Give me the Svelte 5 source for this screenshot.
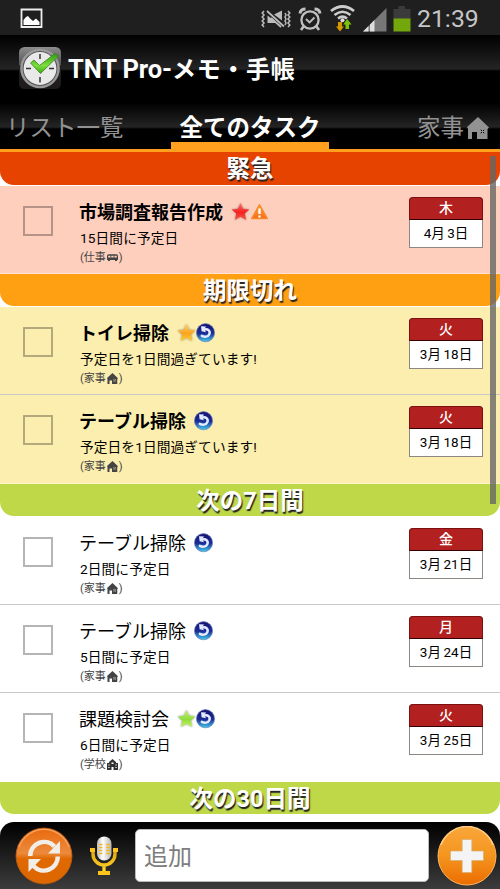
<script lang="ts">
  type Task = {
    title: string;
    due: string;
    list: string;
    place: "bus" | "home" | "school";
    star?: "red" | "gold" | "green";
    warning?: boolean;
    repeat?: boolean;
    weekday: string;
    date: string;
  };

  type Section = { name: string; tone: string; tasks: Task[] };

  const sections: Section[] = [
    {
      name: "緊急",
      tone: "urgent",
      tasks: [
        { title: "市場調査報告作成", due: "15日間に予定日", list: "仕事", place: "bus", star: "red", warning: true, weekday: "木", date: "4月 3日" },
      ],
    },
    {
      name: "期限切れ",
      tone: "overdue",
      tasks: [
        { title: "トイレ掃除", due: "予定日を1日間過ぎています!", list: "家事", place: "home", star: "gold", repeat: true, weekday: "火", date: "3月 18日" },
        { title: "テーブル掃除", due: "予定日を1日間過ぎています!", list: "家事", place: "home", repeat: true, weekday: "火", date: "3月 18日" },
      ],
    },
    {
      name: "次の7日間",
      tone: "upcoming",
      tasks: [
        { title: "テーブル掃除", due: "2日間に予定日", list: "家事", place: "home", repeat: true, weekday: "金", date: "3月 21日" },
        { title: "テーブル掃除", due: "5日間に予定日", list: "家事", place: "home", repeat: true, weekday: "月", date: "3月 24日" },
        { title: "課題検討会", due: "6日間に予定日", list: "学校", place: "school", star: "green", repeat: true, weekday: "火", date: "3月 25日" },
      ],
    },
    { name: "次の30日間", tone: "upcoming", tasks: [] },
  ];

  let checked = $state<Record<string, boolean>>({});
  let draft = $state("");

  function toggle(key: string) {
    checked[key] = !checked[key];
  }
</script>

{#snippet star(color: string)}
  <svg class="star {color}" width="19" height="20" viewBox="0 0 19 20">
    <path d="M9.5 1 L12.1 6.8 L18.4 7.4 L13.7 11.6 L15.2 18 L9.5 14.7 L3.8 18 L5.3 11.6 L.6 7.4 L6.9 6.8 Z" fill="url(#star-{color})" />
  </svg>
{/snippet}

{#snippet home(size: number)}
  <svg width={size} height={size} viewBox="0 0 22 22">
    <path fill="currentColor" fill-rule="evenodd" d="M11 0 L22 10.5 L20.5 12 V22 H10 V15 H5 V22 H1 V12 L0 10 Z M13 12 V17 H18 V12 Z" />
    <path d="M13.5 12.5 H17.5 V16.5 H13.5 Z M15.5 12 V17 M13 14.5 H18" fill="none" stroke="currentColor" stroke-width="1" />
  </svg>
{/snippet}

<svg class="defs" width="0" height="0" aria-hidden="true">
  <defs>
    <linearGradient id="star-red" x2="0" y2="1"><stop offset="0" stop-color="#ff7465" /><stop offset=".55" stop-color="#f5211f" /><stop offset="1" stop-color="#fb5b40" /></linearGradient>
    <linearGradient id="star-gold" x2="0" y2="1"><stop offset="0" stop-color="#ffd56a" /><stop offset=".55" stop-color="#fba31f" /><stop offset="1" stop-color="#ffd02e" /></linearGradient>
    <linearGradient id="star-green" x2="0" y2="1"><stop offset="0" stop-color="#c6f27a" /><stop offset=".55" stop-color="#8fdd3c" /><stop offset="1" stop-color="#c4f65c" /></linearGradient>
    <linearGradient id="warn" x2="0" y2="1"><stop offset="0" stop-color="#ffae3e" /><stop offset="1" stop-color="#f4691b" /></linearGradient>
    <linearGradient id="repeat" x2="0" y2="1"><stop offset="0" stop-color="#16106d" /><stop offset=".55" stop-color="#1b2f98" /><stop offset="1" stop-color="#42cfee" /></linearGradient>
    <linearGradient id="orb-sync" x2="0" y2="1"><stop offset="0" stop-color="#e96a0c" /><stop offset=".45" stop-color="#ec8a3d" /><stop offset=".55" stop-color="#e06800" /><stop offset="1" stop-color="#dd6700" /></linearGradient>
    <linearGradient id="orb-add" x2="0" y2="1"><stop offset="0" stop-color="#f9a63a" /><stop offset=".5" stop-color="#f4951f" /><stop offset="1" stop-color="#ec6c00" /></linearGradient>
    <linearGradient id="gold" x2="0" y2="1"><stop offset="0" stop-color="#e2a30c" /><stop offset="1" stop-color="#ffd62c" /></linearGradient>
    <linearGradient id="silver"><stop offset="0" stop-color="#bbb" /><stop offset=".4" stop-color="#fff" /><stop offset="1" stop-color="#b5b5b5" /></linearGradient>
    <linearGradient id="tile" x2="0" y2="1"><stop offset="0" stop-color="#8c8c8c" /><stop offset=".42" stop-color="#555" /><stop offset=".44" stop-color="#272324" /><stop offset="1" stop-color="#1e1a1b" /></linearGradient>
    <linearGradient id="tick" x2="0" y2="1"><stop offset="0" stop-color="#2e9a10" /><stop offset=".6" stop-color="#7be03b" /><stop offset="1" stop-color="#3da51a" /></linearGradient>
  </defs>
</svg>

<div class="screen">
  <div class="status">
    <svg class="picture" width="23" height="21" viewBox="0 0 23 21">
      <path d="M1.5 1.5 H21.5 V19 H1.5 Z" fill="none" stroke="#eee" stroke-width="1.8" />
      <path d="M3.5 17 V12 L6 9 L8 8 L10 10.5 L13 13 L16 10.5 L19.5 14 V17 Z" fill="#fff" />
    </svg>
    <div class="indicators">
      <svg width="30" height="21" viewBox="0 0 30 21">
        <path d="M3 2 L1.2 4 L3 6 L1.2 8 L3 10 L1.2 12 L3 14 L1.2 16 L3 18 M27 2 L28.8 4 L27 6 L28.8 8 L27 10 L28.8 12 L27 14 L28.8 16 L27 18 M24 4 L25 6 L24 8 L25 10 L24 12 L25 14 L24 16" fill="none" stroke="#bbb" stroke-width="1.5" />
        <path d="M6.5 6.5 L16.5 14 H6.5 Z M13 5.5 L21 1.5 V11.5 Z" fill="#bbb" />
        <path d="M6 2 L23 17.5 M10 9 L20 18" stroke="#bbb" stroke-width="1.7" />
      </svg>
      <svg width="24" height="24" viewBox="0 0 24 24" fill="none" stroke="#c0c0c0">
        <circle cx="12" cy="13" r="8.6" stroke-width="2.3" />
        <path d="M8 12 L11.5 15.5 L16.5 10.5" stroke-width="1.8" />
        <path d="M2 6.5 Q2.5 2 7.5 2 M22 6.5 Q21.5 2 16.5 2" stroke-width="3" />
        <path d="M5.5 19.5 L3 23 M18.5 19.5 L21 23" stroke-width="2.6" />
      </svg>
      <svg class="wifi" width="25" height="27" viewBox="0 0 25 27">
        <path d="M1 6 Q12.5 -3 24 6" fill="none" stroke="#ccc" stroke-width="2.8" />
        <path d="M4.5 10 Q12.5 3.5 20.5 10 M8 13.5 Q12.5 9.8 17 13.5" fill="none" stroke="#ccc" stroke-width="2.6" />
        <circle cx="12.5" cy="15.3" r="2" fill="#ddd" />
        <path d="M8 17 H12 V21.5 H14 L10 26.5 L6 21.5 H8 Z" fill="#d59a00" />
        <path d="M15.5 24 V19.5 H13.2 L17.2 14 L21.5 19.5 H19 V24 Z" fill="#7fc20c" />
      </svg>
      <svg class="signal" width="24" height="24" viewBox="0 0 24 24">
        <path d="M0 23.5 L23.5 0 V23.5 Z" fill="#777" />
        <path d="M0 23.5 L5.5 18 V23.5 Z M7 23.5 V16.5 L11.5 12 V23.5 Z" fill="#ddd" />
      </svg>
      <svg class="battery" width="18" height="26" viewBox="0 0 18 26">
        <path d="M5.5 0 H12 V3 H17.5 V13 H.5 V3 H5.5 Z" fill="#3b3b3b" />
        <path d="M.5 12.5 H17.5 V25.5 H.5 Z" fill="#74a70b" />
      </svg>
      <span class="clock">21:39</span>
    </div>
  </div>

  <header class="titlebar">
    <svg width="42" height="42" viewBox="0 0 42 42">
      <rect width="42" height="42" rx="5.5" fill="url(#tile)" />
      <circle cx="21" cy="21.5" r="18.7" fill="#e9e9e9" stroke="#9a9a9a" stroke-width="2.2" />
      <circle cx="21" cy="21.5" r="17" fill="none" stroke="#555" stroke-width="1.2" />
      <path d="M21 7 V12 M21 30 V35.5 M7 21.5 H12 M30 21.5 H35" stroke="#333" stroke-width="1.5" />
      <path d="M11.5 16 L15 13 L20.5 18.5 L36 6.5 L39.5 9 L21.5 26.5 Z" fill="url(#tick)" stroke="#38801e" stroke-width=".8" />
    </svg>
    <h1>TNT Pro-<span>メモ・手帳</span></h1>
  </header>

  <nav class="tabs">
    <button class="tab left">リスト一覧</button>
    <button class="tab active">全てのタスク</button>
    <button class="tab right">家事{@render home(22)}</button>
  </nav>

  <main>
    {#each sections as section}
      <section class={section.tone}>
        <h2><span>{section.name}</span></h2>
        {#each section.tasks as task, i}
          {@const key = `${section.name}-${i}`}
          <article class="task">
            <button class="check" aria-label={task.title} aria-pressed={!!checked[key]} onclick={() => toggle(key)}>
              {#if checked[key]}✓{/if}
            </button>
            <div class="body">
              <div class="title">
                <span>{task.title}</span>
                <span class="marks">
                  {#if task.star}{@render star(task.star)}{/if}
                  {#if task.warning}
                    <svg width="19" height="20" viewBox="0 0 19 20">
                      <path d="M9.5 2.8 L17.3 16.5 H1.7 Z" fill="url(#warn)" stroke="#f58a2b" stroke-width="1.5" stroke-linejoin="round" />
                      <path d="M9.5 6.5 V12 M9.5 13.5 V15.5" stroke="#fff" stroke-width="2.3" />
                    </svg>
                  {/if}
                  {#if task.repeat}
                    <svg width="19" height="20" viewBox="0 0 19 20">
                      <circle cx="9.5" cy="9.7" r="9.1" fill="url(#repeat)" stroke="#6d83bd" stroke-width=".7" />
                      <path d="M7.5 6.6 C12.5 5.2 14.6 8.4 13.3 11.2 C12 14 8.5 14.3 5.8 12.8" fill="none" stroke="#e3ebff" stroke-width="2.5" stroke-linecap="round" />
                      <path d="M5 3.2 L10.2 3.6 L8.2 6 L10 9.2 L5.6 8.2 Z" fill="#e3ebff" />
                    </svg>
                  {/if}
                </span>
              </div>
              <div class="due">{task.due}</div>
              <div class="list">
                <span>({task.list}</span>
                {#if task.place === "home"}
                  {@render home(11)}
                {:else if task.place === "bus"}
                  <svg width="11" height="11" viewBox="0 0 11 11">
                    <path fill="#444" fill-rule="evenodd" d="M1.5 2.2 H9.5 Q11 2.2 11 4 V8 H10 V9 H8 V8 H3 V9 H1 V8 H0 V4 Q0 2.2 1.5 2.2 Z M1.2 3.7 V5.5 H3.5 V3.7 Z M4.3 3.7 V5.5 H6.6 V3.7 Z M7.4 3.7 V5.5 H9.8 V3.7 Z" />
                  </svg>
                {:else}
                  <svg width="11" height="11" viewBox="0 0 11 11">
                    <path fill="#333" fill-rule="evenodd" d="M5.5 0 L9 3 V4 H11 V11 H6.5 V8 H4.5 V11 H0 V4 H2 V3 Z M1.3 5.5 V6.5 H2.6 V5.5 Z M8.4 5.5 V6.5 H9.7 V5.5 Z M1.3 8 V9 H2.6 V8 Z M8.4 8 V9 H9.7 V8 Z M4.5 3.5 V5 H6.5 V3.5 Z" />
                  </svg>
                {/if}
                <span>)</span>
              </div>
            </div>
            <div class="calendar">
              <div class="weekday">{task.weekday}</div>
              <div class="date">{task.date}</div>
            </div>
          </article>
        {/each}
      </section>
    {/each}
    <div class="scrollbar"></div>
  </main>

  <footer>
    <button class="round sync" aria-label="同期">
      <svg width="58" height="58" viewBox="0 0 58 58">
        <circle cx="29" cy="29" r="28" fill="url(#orb-sync)" stroke="#b95c10" stroke-width=".8" />
        <path d="M4 20 A26.5 26.5 0 0 1 54 20" fill="none" stroke="#f6a468" stroke-width="1.3" />
        <path d="M15.2 29 A14 14 0 0 1 39.5 19.5 M42.8 29.5 A14 14 0 0 1 18.5 39" fill="none" stroke="#f3ede8" stroke-width="4.6" />
        <path d="M45 14 V26.5 H33 Z M13.5 45 V32 H26 Z" fill="#f3ede8" />
      </svg>
    </button>
    <button class="round mic" aria-label="音声">
      <svg width="28" height="40" viewBox="0 0 28 40">
        <path d="M3 14 V18 A11 11 0 0 0 25 18 V14 M14 29 V36" fill="none" stroke="url(#gold)" stroke-width="3.4" />
        <path d="M0 12 H5 V16 H0 Z M23 12 H28 V16 H23 Z M8 35 H20 V39 H8 Z" fill="#fdc51b" />
        <rect x="7" y=".5" width="14.5" height="24" rx="7.2" fill="url(#silver)" />
        <path d="M9 8.5 H12.5 M9 11.5 H12.5 M9 14.5 H12.5 M9 17.5 H12.5 M16 8.5 H20 M16 11.5 H20 M16 14.5 H20 M16 17.5 H20" stroke="#f2b829" stroke-width="1.5" />
      </svg>
    </button>
    <input type="text" placeholder="追加" bind:value={draft} />
    <button class="round add" aria-label="追加">
      <svg width="60" height="60" viewBox="0 0 60 60">
        <circle cx="30" cy="30" r="29" fill="url(#orb-add)" stroke="#ffb65c" stroke-width="1" />
        <path d="M4 19 A27.5 27.5 0 0 1 56 19" fill="none" stroke="#ffcb7e" stroke-width="1.6" />
        <path d="M25.2 13.5 H34.8 V25 H46.5 V34.5 H34.8 V46.5 H25.2 V34.5 H13.5 V25 H25.2 Z" fill="#f4f4f4" stroke="#d6b078" stroke-width=".7" />
      </svg>
    </button>
  </footer>
</div>

<style>
  :global(body) {
    background: #fff;
  }

  .screen {
    display: flex;
    flex-direction: column;
    width: 500px;
    height: 889px;
    overflow: hidden;
    background: #fff;
    color: #000;
    font-family: Roboto, "Noto Sans CJK JP", sans-serif;
  }

  svg {
    display: block;
    flex: none;
  }

  .defs {
    position: absolute;
  }

  button {
    padding: 0;
    border: 0;
    background: none;
    font: inherit;
    color: inherit;
  }

  .status {
    display: flex;
    flex: none;
    align-items: center;
    justify-content: space-between;
    height: 35px;
    padding: 0 21px 0 20px;
    background: #1f1f1f;
  }

  .picture {
    margin-top: 1px;
  }

  .indicators {
    display: flex;
    align-items: center;
  }

  .indicators svg:nth-child(1) {
    margin-top: 3px;
  }

  .indicators svg:nth-child(2) {
    margin: 2px 0 0 7px;
  }

  .wifi {
    margin: 1px 0 0 8px;
  }

  .signal {
    margin: 4px 0 0 8px;
  }

  .battery {
    margin: 3px 0 0 6px;
  }

  .clock {
    width: 62px;
    margin-left: 6px;
    font-size: 24.8px;
    line-height: 35px;
    color: #c6c6c6;
    white-space: nowrap;
    padding-top: 2px;
  }

  .titlebar {
    display: flex;
    flex: none;
    align-items: center;
    gap: 7px;
    height: 68px;
    padding-left: 19px;
    background: linear-gradient(#000, #242424 34px, #000 36px);
  }

  .titlebar svg {
    margin-bottom: 2px;
  }

  h1 {
    margin: 0;
    font-size: 25.5px;
    font-weight: 700;
    line-height: 66px;
    letter-spacing: -0.1px;
    color: #fff;
    white-space: nowrap;
  }

  h1 span {
    font-size: 24px;
    letter-spacing: 0.7px;
  }

  .tabs {
    display: grid;
    grid-template-columns: 171px 158px 171px;
    flex: none;
    box-sizing: border-box;
    height: 49px;
    border-bottom: 3px solid #ffa01f;
    background: linear-gradient(#000, #242424 24px, #000 26px);
    font-size: 23.5px;
    line-height: 46px;
    color: #929292;
  }

  .tab {
    display: flex;
    align-items: center;
    height: 46px;
    padding-top: 3px;
    white-space: nowrap;
  }

  .left {
    padding-left: 6px;
  }

  .active {
    justify-content: center;
    box-sizing: border-box;
    border-bottom: 7px solid #ffa01f;
    padding: 10px 0 0;
    font-weight: 700;
    color: #fff;
  }

  .right {
    justify-content: flex-end;
    gap: 3px;
    padding-right: 11px;
  }

  main {
    position: relative;
    flex: 1;
    min-height: 0;
  }

  h2 {
    box-sizing: border-box;
    height: 33px;
    margin: 0;
    font-size: 23.5px;
    font-weight: 700;
    line-height: 34px;
    text-align: center;
    color: #fff;
    text-shadow: 1px 1.5px 1px #222;
    background: #fff;
  }

  h2 span {
    display: block;
    height: 32px;
    border-radius: 0 0 14px 14px;
  }

  .urgent h2 {
    height: 33.5px;
  }

  .urgent h2 span {
    height: 32.5px;
    background: #e64200;
  }

  .overdue h2 span {
    background: #ffa012;
  }

  .upcoming h2 span {
    background: #bed848;
  }

  .task {
    display: flex;
    align-items: flex-start;
    box-sizing: border-box;
    height: 88.4px;
    border-bottom: 1px solid #c8c8c8;
    padding: 0 17px 0 23px;
  }

  .task:last-child {
    border-bottom-color: #fff6;
  }

  .urgent .task {
    background: #ffcfbe;
  }

  .overdue .task {
    background: #fceeae;
  }

  .check {
    box-sizing: border-box;
    width: 30px;
    height: 30px;
    margin-top: 20px;
    border: 2px solid #0000004a;
    font-size: 20px;
    line-height: 26px;
  }

  .body {
    flex: 1;
    padding: 13px 0 0 26px;
  }

  .title {
    display: flex;
    align-items: center;
    gap: 8px;
    height: 27px;
    font-size: 18px;
    line-height: 27px;
  }

  .urgent .title,
  .overdue .title {
    font-weight: 700;
  }

  .marks {
    display: flex;
    padding-bottom: 1px;
  }

  .star {
    filter: drop-shadow(0 0 1px #777c);
  }

  .due {
    height: 24px;
    padding-left: 1px;
    font-size: 13.7px;
    line-height: 24px;
    letter-spacing: 0.1px;
    white-space: nowrap;
  }

  .list {
    display: flex;
    align-items: center;
    gap: 1px;
    height: 16px;
    padding-left: 1px;
    font-size: 11px;
    line-height: 16px;
    color: #444;
  }

  .list svg {
    margin-bottom: 1px;
  }

  .calendar {
    box-sizing: border-box;
    width: 74px;
    height: 51px;
    margin-top: 11px;
    border: 1px solid #8e8682;
    border-top: 0;
    border-radius: 4px 4px 0 0;
    background: #fff;
    text-align: center;
  }

  .weekday {
    box-sizing: border-box;
    height: 23px;
    margin: 0 -1px;
    border: 1px solid #7c1010;
    border-bottom-color: #300;
    border-radius: 4px 4px 0 0;
    background: #b22020;
    font-size: 14px;
    font-weight: 500;
    line-height: 21px;
    color: #fff;
  }

  .date {
    font-size: 13.5px;
    line-height: 27px;
    word-spacing: -0.8px;
  }

  .scrollbar {
    position: absolute;
    top: 4px;
    right: 4px;
    width: 6px;
    height: 348px;
    background: #666c;
  }

  footer {
    display: flex;
    flex: none;
    align-items: center;
    box-sizing: border-box;
    height: 67px;
    padding-left: 15px;
    border-radius: 14px 14px 0 0;
    background: linear-gradient(#000, #3c3c3c);
  }

  .mic {
    margin-left: 17px;
  }

  input {
    box-sizing: border-box;
    width: 294px;
    height: 53px;
    margin-left: 17px;
    border: 1px solid #bbb;
    border-radius: 5px;
    padding: 2px 9px 0 8px;
    background: #fff;
    font-family: inherit;
    font-size: 24px;
  }

  input::placeholder {
    color: #7d7d7d;
    opacity: 1;
  }

  .add {
    margin-left: 8px;
  }
</style>
